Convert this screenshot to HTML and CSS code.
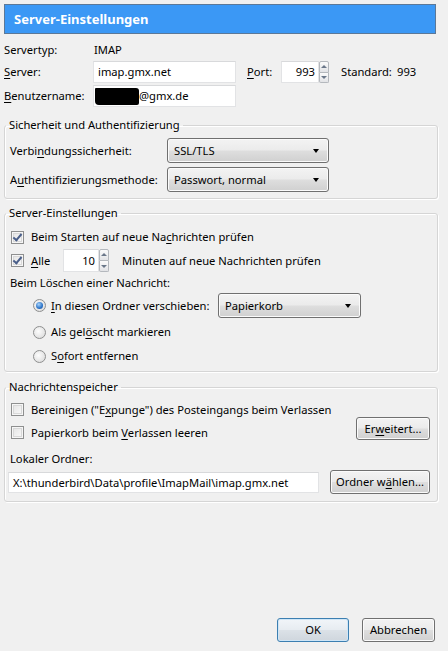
FILE: index.html
```html
<!DOCTYPE html>
<html lang="de">
<head>
<meta charset="utf-8">
<title>Server-Einstellungen</title>
<link rel="stylesheet" href="styles.css">
</head>
<body>
<div class="dialog">
  <div class="titlebar"><h1 class="title">Server-Einstellungen</h1></div>

  <div class="top-grid">
    <span class="lbl">Servertyp:</span>
    <span class="val">IMAP</span>

    <span class="lbl"><u>S</u>erver:</span>
    <div class="server-row">
      <div class="textbox w-server">imap.gmx.net</div>
      <span class="port-lbl"><u>P</u>ort:</span>
      <div class="spin">
        <div class="textbox num w-port">993</div>
        <div class="arrows"><span class="arr up"></span><span class="arr down"></span></div>
      </div>
      <span class="std">Standard:</span>
      <span class="stdval">993</span>
    </div>

    <span class="lbl"><u>B</u>enutzername:</span>
    <div class="textbox w-server user"><span class="redact"></span>@gmx.de</div>
  </div>

  <fieldset class="group g-sec">
    <legend>Sicherheit und Authentifizierung</legend>
    <div class="sec-grid">
      <span>Verbi<u>n</u>dungssicherheit:</span>
      <div class="dropdown w-dd">SSL/TLS<span class="caret"></span></div>
      <span>A<u>u</u>thentifizierungsmethode:</span>
      <div class="dropdown w-dd">Passwort, normal<span class="caret"></span></div>
    </div>
  </fieldset>

  <fieldset class="group g-srv">
    <legend>Server-Einstellungen</legend>
    <div class="row r1">
      <span class="cb checked"></span>
      <span>Beim Starten auf neue Na<u>c</u>hrichten prüfen</span>
    </div>
    <div class="row r2">
      <span class="cb checked"></span>
      <span class="alle"><u>A</u>lle</span>
      <div class="spin">
        <div class="textbox num w-min">10</div>
        <div class="arrows"><span class="arr up"></span><span class="arr down"></span></div>
      </div>
      <span class="minuten">Minuten auf neue Nachrichten prüfen</span>
    </div>
    <div class="row r3">Beim Löschen einer Nachricht:</div>
    <div class="row r4 indent">
      <span class="radio selected"></span>
      <span class="move-lbl"><u>I</u>n diesen Ordner verschieben:</span>
      <div class="dropdown w-folder">Papierkorb<span class="caret"></span></div>
    </div>
    <div class="row r5 indent">
      <span class="radio"></span>
      <span>Als gel<u>ö</u>scht markieren</span>
    </div>
    <div class="row r6 indent">
      <span class="radio"></span>
      <span>S<u>o</u>fort entfernen</span>
    </div>
  </fieldset>

  <fieldset class="group g-store">
    <legend>Nachrichtenspeicher</legend>
    <div class="store-top">
      <div class="store-checks">
        <div class="row r-cb">
          <span class="cb"></span>
          <span>Bereinigen ("E<u>x</u>punge") des Posteingangs beim Verlassen</span>
        </div>
        <div class="row r-cb">
          <span class="cb"></span>
          <span>Papierkorb beim <u>V</u>erlassen leeren</span>
        </div>
      </div>
      <button class="btn btn-adv" type="button">Er<u>w</u>eitert...</button>
    </div>
    <div class="row r-local">Lokaler Ordner:</div>
    <div class="row r-path">
      <div class="textbox w-path">X:\thunderbird\Data\profile\ImapMail\imap.gmx.net</div>
      <button class="btn btn-folder" type="button">Ordner w<u>ä</u>hlen...</button>
    </div>
  </fieldset>

  <div class="footer">
    <button class="btn btn-ok" type="button">OK</button>
    <button class="btn btn-cancel" type="button">Abbrechen</button>
  </div>
</div>
</body>
</html>
```

FILE: styles.css
```css
* { box-sizing: border-box; }

html, body {
  margin: 0;
  padding: 0;
}

body {
  background: #f0f0f0;
  font-family: "Noto Sans", "Segoe UI", "Liberation Sans", sans-serif;
  font-size: 11.2px;
  line-height: 16px;
  color: #000;
  width: 448px;
  height: 651px;
  overflow: hidden;
}

u { text-underline-offset: 2px; }

.dialog {
  display: flex;
  flex-direction: column;
  height: 651px;
}

/* ---------- title ---------- */
.titlebar {
  margin: 4px 12px 0 4px;
  height: 30px;
  background: #3b98f5;
  border: 1px solid #5b7898;
  display: flex;
  align-items: center;
  padding-left: 9px;
}

.title {
  margin: 0;
  font-size: 13px;
  font-weight: bold;
  color: #fff;
  line-height: 18px;
}

/* ---------- top rows ---------- */
.top-grid {
  margin-top: 7px;
  padding-left: 4px;
  display: grid;
  grid-template-columns: 89px auto;
  grid-template-rows: 18px 22px 22px;
  row-gap: 2px;
  align-items: center;
}

.val { margin-left: 1px; }

.server-row {
  display: flex;
  align-items: center;
}

.textbox {
  height: 22px;
  background: #fff;
  border: 1px solid #e2e3e5;
  border-top-color: #d8d9db;
  padding: 2px 4px;
  white-space: nowrap;
  overflow: hidden;
}

.textbox.num { text-align: right; padding-right: 3px; }

.w-server { width: 143px; }
.w-port { width: 38px; }
.w-min { width: 36px; height: 23px; padding-top: 3px; }
.w-path { width: 311px; height: 21px; margin-left: -2px; }

.port-lbl { margin-left: 11px; width: 34px; }
.std { margin-left: 12px; width: 56px; }

.user {
  display: flex;
  align-items: center;
  padding-left: 1px;
}

.redact {
  display: inline-block;
  width: 44px;
  height: 17px;
  background: #000;
  border-radius: 1px 3px 2px 4px;
}

/* spinner */
.spin {
  display: flex;
  align-items: stretch;
}

.arrows {
  width: 10px;
  display: flex;
  flex-direction: column;
}

.arr {
  flex: 1;
  border: 1px solid #b4b8bd;
  background: linear-gradient(#fbfbfb, #e2e3e6);
  position: relative;
}

.arr.up { border-radius: 2px 2px 0 0; }
.arr.down { border-radius: 0 0 2px 2px; border-top: none; }

.arr::after {
  content: "";
  position: absolute;
  left: 50%;
  top: 50%;
  margin-left: -3px;
  border-left: 3px solid transparent;
  border-right: 3px solid transparent;
}

.arr.up::after {
  margin-top: -2px;
  border-bottom: 3px solid #6a7789;
}

.arr.down::after {
  margin-top: -1px;
  border-top: 3px solid #6a7789;
}

/* ---------- groups ---------- */
.group {
  margin: 0 10px 0 4px;
  border: 1px solid #d5d5d5;
  border-radius: 3px;
  box-shadow: inset 1px 1px 0 #fff, 1px 1px 0 #fff;
  padding: 0 7px 0 5px;
  min-width: 0;
}

.group legend {
  padding: 0 3px;
  margin-left: -4px;
  line-height: 16px;
}

.g-sec { margin-top: 10px; padding-top: 5px; padding-bottom: 6px; }
.g-srv { margin-top: 6px; padding-top: 4px; padding-bottom: 3px; }
.g-store { margin-top: 7px; padding-top: 3px; padding-bottom: 7px; }

.sec-grid {
  display: grid;
  grid-template-columns: 157px 162px;
  grid-template-rows: 25px 25px;
  row-gap: 4px;
  align-items: center;
}

.dropdown {
  height: 25px;
  border: 1px solid #707070;
  border-radius: 3px;
  background: linear-gradient(#f3f3f3 0%, #ebebeb 48%, #dedede 52%, #d0d0d0 100%);
  box-shadow: inset 0 0 0 1px #fbfbfb;
  padding: 0 6px;
  display: flex;
  align-items: center;
  justify-content: space-between;
  white-space: nowrap;
}

.w-dd { width: 162px; }
.w-folder { width: 143px; }

.caret {
  width: 0;
  height: 0;
  border-left: 3.5px solid transparent;
  border-right: 3.5px solid transparent;
  border-top: 4px solid #000;
  margin-right: 3px;
}

.row {
  display: flex;
  align-items: center;
  white-space: nowrap;
}

.r1 { height: 24px; }
.r2 { height: 23px; }
.r3 { height: 21px; }
.r4 { height: 25px; }
.r5 { height: 24px; margin-top: 2px; }
.r6 { height: 24px; }

.indent { padding-left: 23px; }

/* checkbox */
.cb {
  width: 13px;
  height: 13px;
  margin-left: 1px;
  margin-right: 7px;
  border: 1px solid #8e8f8f;
  background: linear-gradient(135deg, #e2e2e2, #fbfbfb);
  box-shadow: inset 0 0 0 1px #f6f6f6, inset 0 0 0 2px #d8d8d8;
  flex: none;
  position: relative;
}

.cb.checked::after {
  content: "";
  position: absolute;
  left: 3px;
  top: 0px;
  width: 3px;
  height: 7px;
  border-right: 2px solid #4a5f8a;
  border-bottom: 2px solid #4a5f8a;
  transform: rotate(40deg);
}

.alle { width: 32px; }
.minuten { margin-left: 13px; }

/* radio */
.radio {
  width: 13px;
  height: 13px;
  border-radius: 50%;
  border: 1px solid #8e8f8f;
  background: radial-gradient(circle at 40% 40%, #fdfdfd, #d6d6d6);
  margin-right: 5px;
  flex: none;
  position: relative;
}

.radio.selected::after {
  content: "";
  position: absolute;
  left: 2px;
  top: 2px;
  width: 7px;
  height: 7px;
  border-radius: 50%;
  background: radial-gradient(circle at 40% 35%, #a8d4fb, #2b73c8 60%, #1d4f94);
}

.move-lbl { width: 167px; }

/* store */
.store-top {
  display: flex;
  justify-content: space-between;
}

.r-cb { height: 23px; }

.btn {
  font: inherit;
  color: #000;
  border: 1px solid #707070;
  border-radius: 3px;
  background: linear-gradient(#f3f3f3 0%, #ebebeb 48%, #dedede 52%, #d0d0d0 100%);
  box-shadow: inset 0 0 0 1px #fbfbfb;
  padding: 0;
  height: 24px;
  line-height: 16px;
}

.btn-adv {
  width: 74px;
  height: 23px;
  align-self: flex-end;
  margin-bottom: 4px;
}

.r-local { height: 22px; margin-top: 4px; }

.r-path {
  height: 24px;
  justify-content: space-between;
}

.btn-folder { width: 100px; }

/* footer */
.footer {
  margin-top: auto;
  display: flex;
  justify-content: flex-end;
  gap: 13px;
  padding: 0 13px 9px 0;
}

.btn-ok {
  width: 72px;
  border-color: #3c7fb1;
  background: linear-gradient(#f1f5f9 0%, #e7ecf1 48%, #dbe1e7 52%, #cfd6dd 100%);
  box-shadow: inset 0 0 0 1px #cfe6f7;
}

.btn-cancel { width: 73px; }
```
